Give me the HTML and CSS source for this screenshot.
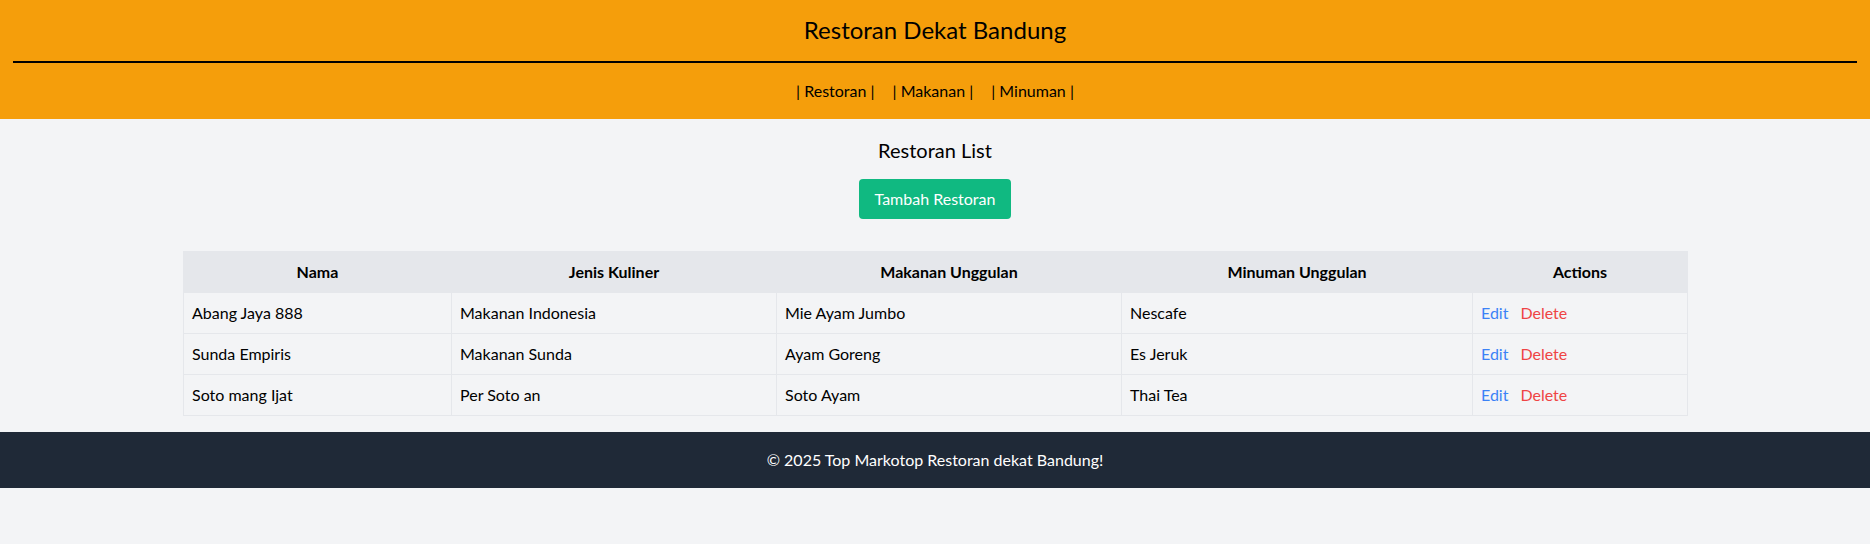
FILE: index.html
```html
<!DOCTYPE html>
<html lang="id">
<head>
<meta charset="utf-8">
<title>Restoran Dekat Bandung</title>
<link rel="stylesheet" href="styles.css">
</head>
<body>
<header class="site-header">
  <h1 class="site-title">Restoran Dekat Bandung</h1>
  <hr class="divider">
  <nav class="site-nav">
    <a href="#" class="nav-link">| Restoran |</a>
    <a href="#" class="nav-link">| Makanan |</a>
    <a href="#" class="nav-link">| Minuman |</a>
  </nav>
</header>
<main class="container">
  <h2 class="page-title">Restoran List</h2>
  <div class="actions-top">
    <a href="#" class="btn-add">Tambah Restoran</a>
  </div>
  <table class="data-table">
    <colgroup>
      <col class="col-nama">
      <col class="col-jenis">
      <col class="col-makanan">
      <col class="col-minuman">
      <col class="col-actions">
    </colgroup>
    <thead>
      <tr>
        <th>Nama</th>
        <th>Jenis Kuliner</th>
        <th>Makanan Unggulan</th>
        <th>Minuman Unggulan</th>
        <th>Actions</th>
      </tr>
    </thead>
    <tbody>
      <tr>
        <td>Abang Jaya 888</td>
        <td>Makanan Indonesia</td>
        <td>Mie Ayam Jumbo</td>
        <td>Nescafe</td>
        <td><a href="#" class="link-edit">Edit</a><a href="#" class="link-delete">Delete</a></td>
      </tr>
      <tr>
        <td>Sunda Empiris</td>
        <td>Makanan Sunda</td>
        <td>Ayam Goreng</td>
        <td>Es Jeruk</td>
        <td><a href="#" class="link-edit">Edit</a><a href="#" class="link-delete">Delete</a></td>
      </tr>
      <tr>
        <td>Soto mang Ijat</td>
        <td>Per Soto an</td>
        <td>Soto Ayam</td>
        <td>Thai Tea</td>
        <td><a href="#" class="link-edit">Edit</a><a href="#" class="link-delete">Delete</a></td>
      </tr>
    </tbody>
  </table>
</main>
<footer class="site-footer">
  <p class="footer-text">&copy; 2025 Top Markotop Restoran dekat Bandung!</p>
</footer>
</body>
</html>
```
FILE: styles.css
```css
* {
  box-sizing: border-box;
}

html, body {
  margin: 0;
  padding: 0;
}

body {
  background: #f3f4f6;
  font-family: "Lato", "Noto Sans", sans-serif;
  font-size: 16px;
  line-height: 24px;
  color: #000;
}

a {
  text-decoration: none;
  color: inherit;
}

.site-header {
  background: #f59e0b;
  padding: 14px 0 16px;
  text-align: center;
}

.site-title {
  margin: 0;
  font-size: 24px;
  line-height: 32px;
  font-weight: 400;
}

.divider {
  margin: 15px 13px 16px;
  border: 0;
  border-top: 2px solid #000;
  height: 0;
}

.site-nav {
  display: flex;
  justify-content: center;
  gap: 18px;
}

.container {
  max-width: 1536px;
  margin: 0 auto;
  padding: 17px 16px 16px;
}

.page-title {
  margin: 0 0 15px;
  font-size: 20px;
  line-height: 28px;
  font-weight: 400;
  text-align: center;
}

.actions-top {
  display: flex;
  justify-content: center;
  margin-bottom: 32px;
}

.btn-add {
  display: block;
  background: #10b981;
  color: #fff;
  padding: 8px 16px;
  border-radius: 4px;
}

.data-table {
  width: 100%;
  border-collapse: collapse;
  table-layout: fixed;
}

.col-nama { width: 268px; }
.col-jenis { width: 325px; }
.col-makanan { width: 345px; }
.col-minuman { width: 351px; }
.col-actions { width: 215px; }

.data-table th,
.data-table td {
  border: 1px solid #e5e7eb;
  padding: 8px;
  text-align: left;
}

.data-table th {
  background: #e5e7eb;
  font-weight: 700;
  text-align: center;
}

.link-edit {
  color: #3b82f6;
  margin-right: 12px;
}

.link-delete {
  color: #ef4444;
}

.site-footer {
  background: #1f2937;
  color: #fff;
  padding: 16px;
  text-align: center;
}

.footer-text {
  margin: 0;
}
```
